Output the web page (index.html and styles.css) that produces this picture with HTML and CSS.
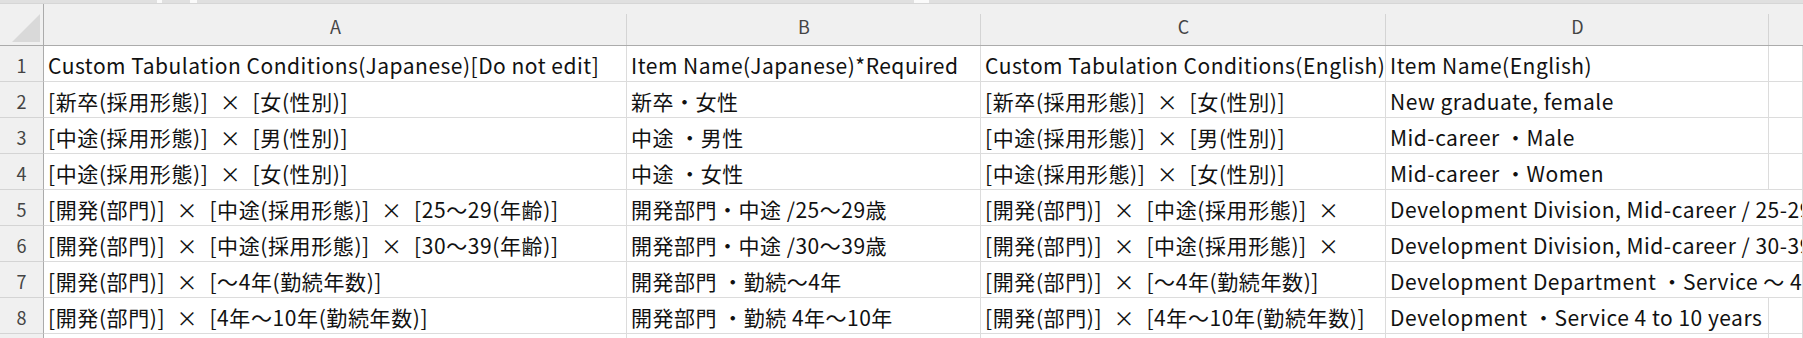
FILE: index.html
```html
<!DOCTYPE html>
<html lang="ja">
<head>
<meta charset="utf-8">
<link rel="stylesheet" href="styles.css">
</head>
<body>
<div class="sheet">
  <div class="topbar">
    <span class="seg seg-a"></span>
    <span class="seg seg-b"></span>
    <span class="seg seg-c"></span>
    <span class="seg seg-d"></span>
  </div>
  <div class="grid">
    <div class="corner">
      <svg width="28" height="28" viewBox="0 0 28 28"><polygon points="28,0 28,28 0,28" fill="#d9d9d9"/></svg>
    </div>
    <div class="colhead">A</div>
    <div class="colhead">B</div>
    <div class="colhead">C</div>
    <div class="colhead">D</div>
    <div class="colhead last"></div>

    <div class="rownum">1</div>
    <div class="cell">Custom Tabulation Conditions(Japanese)[Do not edit]</div>
    <div class="cell">Item Name(Japanese)*Required</div>
    <div class="cell">Custom Tabulation Conditions(English)</div>
    <div class="cell">Item Name(English)</div>
    <div class="cell"></div>

    <div class="rownum">2</div>
    <div class="cell cond">[新卒(採用形態)] × [女(性別)]</div>
    <div class="cell">新卒・女性</div>
    <div class="cell cond">[新卒(採用形態)] × [女(性別)]</div>
    <div class="cell">New graduate, female</div>
    <div class="cell"></div>

    <div class="rownum">3</div>
    <div class="cell cond">[中途(採用形態)] × [男(性別)]</div>
    <div class="cell">中途 ・男性</div>
    <div class="cell cond">[中途(採用形態)] × [男(性別)]</div>
    <div class="cell">Mid-career ・Male</div>
    <div class="cell"></div>

    <div class="rownum">4</div>
    <div class="cell cond">[中途(採用形態)] × [女(性別)]</div>
    <div class="cell">中途 ・女性</div>
    <div class="cell cond">[中途(採用形態)] × [女(性別)]</div>
    <div class="cell">Mid-career ・Women</div>
    <div class="cell"></div>

    <div class="rownum">5</div>
    <div class="cell cond">[開発(部門)] × [中途(採用形態)] × [25～29(年齢)]</div>
    <div class="cell">開発部門・中途 /25～29歳</div>
    <div class="cell cond">[開発(部門)] × [中途(採用形態)] ×</div>
    <div class="cell span2">Development Division, Mid-career / 25-29 years old</div>

    <div class="rownum">6</div>
    <div class="cell cond">[開発(部門)] × [中途(採用形態)] × [30～39(年齢)]</div>
    <div class="cell">開発部門・中途 /30～39歳</div>
    <div class="cell cond">[開発(部門)] × [中途(採用形態)] ×</div>
    <div class="cell span2">Development Division, Mid-career / 30-39 years old</div>

    <div class="rownum">7</div>
    <div class="cell cond">[開発(部門)] × [～4年(勤続年数)]</div>
    <div class="cell">開発部門 ・勤続～4年</div>
    <div class="cell cond">[開発(部門)] × [～4年(勤続年数)]</div>
    <div class="cell span2">Development Department ・Service ～ 4 years</div>

    <div class="rownum">8</div>
    <div class="cell cond">[開発(部門)] × [4年～10年(勤続年数)]</div>
    <div class="cell">開発部門 ・勤続 4年～10年</div>
    <div class="cell cond">[開発(部門)] × [4年～10年(勤続年数)]</div>
    <div class="cell">Development ・Service 4 to 10 years</div>
    <div class="cell"></div>

    <div class="rownum stub"></div>
    <div class="cell stub"></div>
    <div class="cell stub"></div>
    <div class="cell stub"></div>
    <div class="cell stub"></div>
    <div class="cell stub"></div>
  </div>
</div>
</body>
</html>
```

FILE: styles.css
```css
html, body {
  margin: 0;
  padding: 0;
  background: #ffffff;
}

body {
  width: 1803px;
  height: 338px;
  overflow: hidden;
  font-family: "Noto Sans CJK JP", "Noto Sans", sans-serif;
}

.sheet {
  display: flex;
  flex-direction: column;
}

.topbar {
  height: 4px;
  background: #fafafa;
  display: flex;
  gap: 5px;
  border-bottom: 1px solid #d6d6d6;
  box-sizing: border-box;
}

.seg {
  display: block;
  height: 3px;
  background: #e0e0e0;
}
.seg-a { width: 157px; }
.seg-b { width: 28px; }
.seg-c { width: 717px; margin-left: 2px; margin-right: 10px; }
.seg-d { flex: 1; }

.grid {
  display: grid;
  grid-template-columns: 44px 583px 354px 405px 383px 1fr;
  grid-template-rows: 42px repeat(8, 36px) 4px;
}

.corner {
  background: #f0f0f0;
  border-right: 1px solid #ababab;
  border-bottom: 1px solid #ababab;
  box-sizing: border-box;
  display: flex;
  align-items: flex-end;
  justify-content: flex-end;
  padding: 0 3px 3px 0;
}

.colhead {
  background: #f0f0f0;
  border-bottom: 1px solid #ababab;
  box-sizing: border-box;
  display: flex;
  align-items: center;
  justify-content: center;
  font-size: 18px;
  color: #444444;
  position: relative;
  padding-top: 2px;
}

.colhead::after {
  content: "";
  position: absolute;
  right: 0;
  top: 10px;
  bottom: 0;
  width: 1px;
  background: #d4d4d4;
}

.colhead.last::after {
  display: none;
}

.rownum {
  background: #f0f0f0;
  border-right: 1px solid #ababab;
  border-bottom: 1px solid #d4d4d4;
  box-sizing: border-box;
  display: flex;
  align-items: center;
  justify-content: center;
  font-size: 18px;
  color: #444444;
  padding-top: 3px;
}

.cell {
  border-right: 1px solid #dcdcdc;
  border-bottom: 1px solid #dcdcdc;
  box-sizing: border-box;
  display: flex;
  align-items: center;
  padding: 3px 0 0 4px;
  font-size: 21px;
  letter-spacing: 0.5px;
  color: #111111;
  white-space: nowrap;
  overflow: hidden;
  min-width: 0;
}

.cond {
  letter-spacing: 0.6px;
  word-spacing: 6px;
}

.stub {
  padding: 0;
  border-bottom: none;
}

.span2 {
  grid-column: span 2;
}
```
